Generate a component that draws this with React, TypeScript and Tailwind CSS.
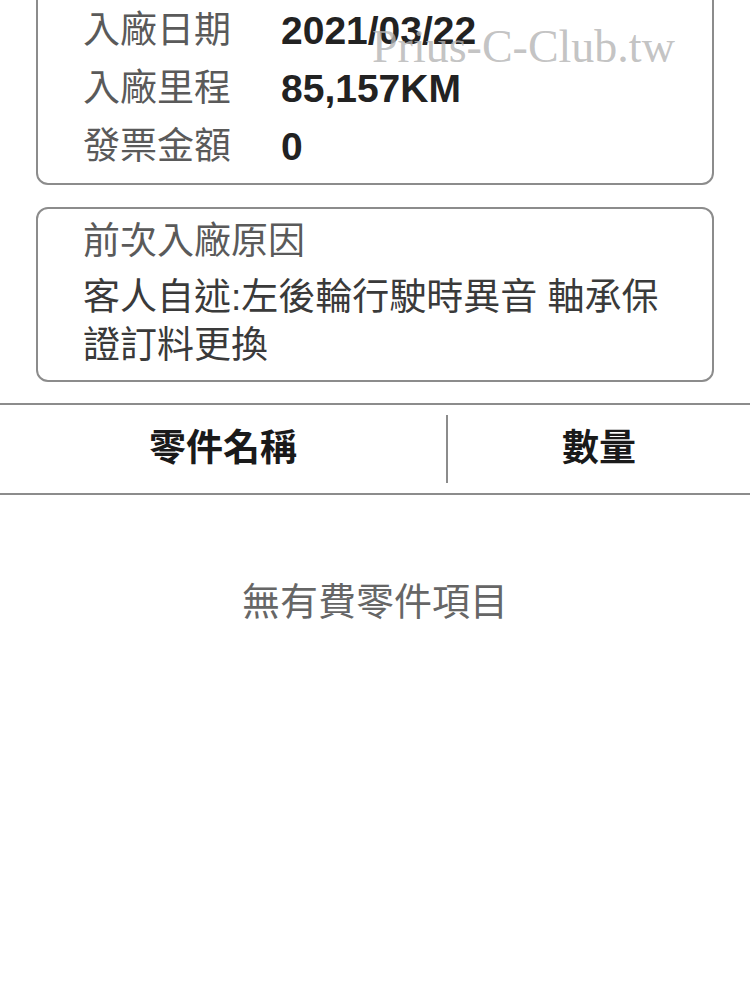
import React from "react";

const font = { fontFamily: '"Liberation Sans", "Noto Sans CJK TC", sans-serif' };

const rows = [
  { label: "入廠日期", value: "2021/03/22" },
  { label: "入廠里程", value: "85,157KM" },
  { label: "發票金額", value: "0" },
];

export default function App() {
  return (
    <div
      className="relative w-[750px] h-[997px] overflow-hidden bg-white"
      style={font}
    >
      {/* 入廠資訊 */}
      <div className="mx-[36px] mt-[-12px] rounded-[12px] border-2 border-[#8c8c8c] pt-[11px] pb-[8px] pl-[45px]">
        {rows.map((r) => (
          <div key={r.label} className="flex h-[58px] items-center">
            <span className="w-[198px] shrink-0 text-[37px] leading-none text-[#5a5a5a]">
              {r.label}
            </span>
            <span className="text-[39px] font-bold leading-none text-[#222222]">
              {r.value}
            </span>
          </div>
        ))}
      </div>

      {/* 前次入廠原因 */}
      <div className="mx-[36px] mt-[22px] rounded-[12px] border-2 border-[#8c8c8c] pt-[9px] pb-[10px] pl-[45px] pr-[40px]">
        <div className="text-[37px] leading-[48px] text-[#5a5a5a]">前次入廠原因</div>
        <div className="mt-[8px] text-[37px] leading-[48px] text-[#3a3a3a]">
          客人自述:左後輪行駛時異音 軸承保證訂料更換
        </div>
      </div>

      {/* 表頭 */}
      <div className="mt-[21px] flex h-[92px] border-y-2 border-[#8c8c8c]">
        <div className="flex w-[446px] items-center justify-center text-[37px] font-bold text-[#1a1a1a]">
          零件名稱
        </div>
        <div className="my-[10px] w-[2px] bg-[#8c8c8c]" />
        <div className="flex flex-1 items-center justify-center text-[37px] font-bold text-[#1a1a1a]">
          數量
        </div>
      </div>

      <div className="mt-[82px] text-center text-[38px] leading-[50px] text-[#666666]">
        無有費零件項目
      </div>

      {/* watermark */}
      <div
        className="pointer-events-none absolute left-[372px] top-[24px] text-[46px] leading-none text-[#b4b4b4]/80"
        style={{ fontFamily: '"Liberation Serif", serif' }}
      >
        Prius-C-Club.tw
      </div>
    </div>
  );
}
